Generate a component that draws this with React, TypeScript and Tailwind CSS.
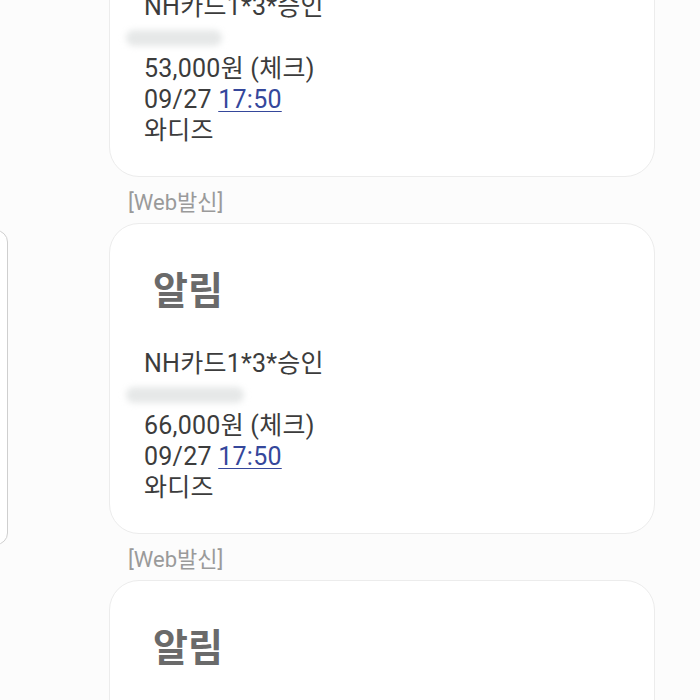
import React from 'react';

type Msg = {
  amount: string;
  blurWidth: string;
};

const messages: Msg[] = [
  { amount: '53,000원 (체크)', blurWidth: 'w-[96px]' },
  { amount: '66,000원 (체크)', blurWidth: 'w-[118px]' },
  { amount: '71,000원 (체크)', blurWidth: 'w-[110px]' },
];

const font = { fontFamily: 'Roboto, "Noto Sans CJK KR", "Noto Sans", sans-serif' };

const Label: React.FC = () => (
  <div className="h-[46px] pt-[12px] pl-[128px] text-[22px] leading-[28px] text-[#9a9a9a]">
    [Web발신]
  </div>
);

const Card: React.FC<{ msg: Msg }> = ({ msg }) => (
  <div className="ml-[109px] w-[546px] h-[311px] bg-white border border-[#ececec] rounded-[30px] pt-[45px] pl-[34px]">
    <div className="pl-[9px] text-[38px] leading-[44px] font-bold text-[#6a6a6a]">알림</div>
    <div className="mt-[35px] text-[25px] leading-[31px] tracking-[0.01em] text-[#3c3c3c]">
      <div>NH카드1*3*승인</div>
      <div className="h-[31px] flex items-center">
        <div className={`${msg.blurWidth} h-[16px] -ml-[18px] rounded-full bg-[#e6e8e8] blur-[3px]`} />
      </div>
      <div>{msg.amount}</div>
      <div>
        09/27{' '}
        <span className="text-[#35479b] underline underline-offset-[3px] decoration-[1px]">17:50</span>
      </div>
      <div>와디즈</div>
    </div>
  </div>
);

const App: React.FC = () => {
  return (
    <div className="relative w-[700px] h-[700px] overflow-hidden bg-[#fcfcfc]" style={font}>
      <div className="absolute left-[-20px] top-[230px] w-[28px] h-[315px] rounded-r-[12px] border border-[#cfcfcf] bg-white" />
      <div className="mt-[-134px]">
        <Card msg={messages[0]} />
        <Label />
        <Card msg={messages[1]} />
        <Label />
        <Card msg={messages[2]} />
      </div>
    </div>
  );
};

export default App;
